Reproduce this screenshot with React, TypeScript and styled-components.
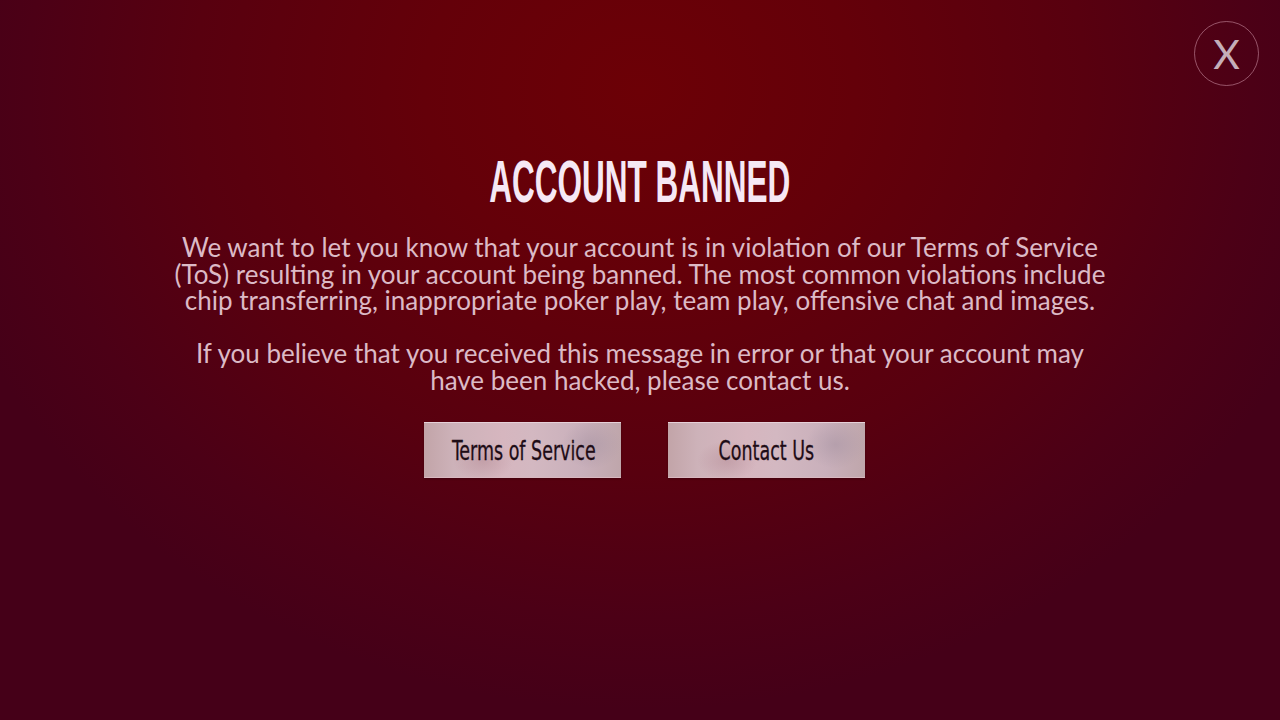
import React from "react";
import styled, { createGlobalStyle } from "styled-components";

const Global = createGlobalStyle`
  html, body { margin: 0; padding: 0; }
  body { width: 1280px; height: 720px; overflow: hidden; }
  #root { width: 1280px; height: 720px; }
`;

const Screen = styled.div`
  position: relative;
  width: 1280px;
  height: 720px;
  box-sizing: border-box;
  background:
    radial-gradient(ellipse 720px 620px at 640px 90px, #6c0006 0%, #640009 30%, #58000f 62%, #4c0016 85%, #450018 100%);
  background-color: #450018;
  display: flex;
  flex-direction: column;
  align-items: center;
  padding-top: 152px;
  font-family: Lato, "Open Sans", sans-serif;
`;

const CloseButton = styled.button`
  position: absolute;
  top: 21px;
  left: 1194px;
  width: 65px;
  height: 65px;
  border-radius: 50%;
  border: 1.5px solid rgba(200, 140, 160, 0.6);
  background: transparent;
  color: #c4aeb9;
  display: flex;
  align-items: center;
  justify-content: center;
  padding: 0 0 1px 0;
  font-family: Lato, sans-serif;
  font-size: 41px;
  font-weight: 400;
  line-height: 1;
  cursor: pointer;
`;

const Title = styled.h1`
  margin: 0;
  font-family: "Liberation Sans", Arial, sans-serif;
  font-weight: 700;
  font-size: 60px;
  line-height: 60px;
  color: #f6e8f4;
  transform: scale(0.525, 1);
  transform-origin: center top;
  white-space: nowrap;
`;

const Body = styled.div`
  margin-top: 22px;
  text-align: center;
  color: #dcbac6;
  font-size: 26px;
  line-height: 26.5px;
  display: flex;
  flex-direction: column;
  gap: 26.5px;
`;

const Para = styled.p`
  margin: 0;
  white-space: nowrap;
`;

const Buttons = styled.div`
  margin-top: 29px;
  padding-left: 8px;
  display: flex;
  gap: 47px;
`;

const ActionButton = styled.button`
  width: 197px;
  height: 56px;
  border: none;
  border-top: 1px solid #e6d0d8;
  border-bottom: 1px solid #d9b8c0;
  padding: 0;
  background:
    radial-gradient(ellipse 30px 20px at 30% 70%, rgba(180, 140, 150, 0.5), transparent),
    radial-gradient(ellipse 30px 24px at 85% 40%, rgba(170, 150, 165, 0.6), transparent),
    linear-gradient(90deg, #c2a4a8 0%, #cdb2b9 15%, #d6b6bf 40%, #d3b8c1 55%, #c9b0bb 80%, #bfa6ab 100%);
  color: #1e0c16;
  font-family: "DejaVu Sans Condensed", "DejaVu Sans", sans-serif;
  font-size: 27px;
  cursor: pointer;
  box-shadow: 0 1px 2px rgba(0, 0, 0, 0.25);
`;

const ButtonLabel = styled.span`
  display: inline-block;
  transform: scaleX(0.72);
  white-space: nowrap;
  -webkit-text-stroke: 0.3px #1e0c16;
`;

export default function App() {
  return (
    <>
      <Global />
      <Screen>
        <CloseButton aria-label="Close">X</CloseButton>
        <Title>ACCOUNT BANNED</Title>
        <Body>
          <Para>
            We want to let you know that your account is in violation of our Terms of Service<br />
            (ToS) resulting in your account being banned. The most common violations include<br />
            chip transferring, inappropriate poker play, team play, offensive chat and images.
          </Para>
          <Para>
            If you believe that you received this message in error or that your account may<br />
            have been hacked, please contact us.
          </Para>
        </Body>
        <Buttons>
          <ActionButton><ButtonLabel>Terms of Service</ButtonLabel></ActionButton>
          <ActionButton><ButtonLabel>Contact Us</ButtonLabel></ActionButton>
        </Buttons>
      </Screen>
    </>
  );
}
